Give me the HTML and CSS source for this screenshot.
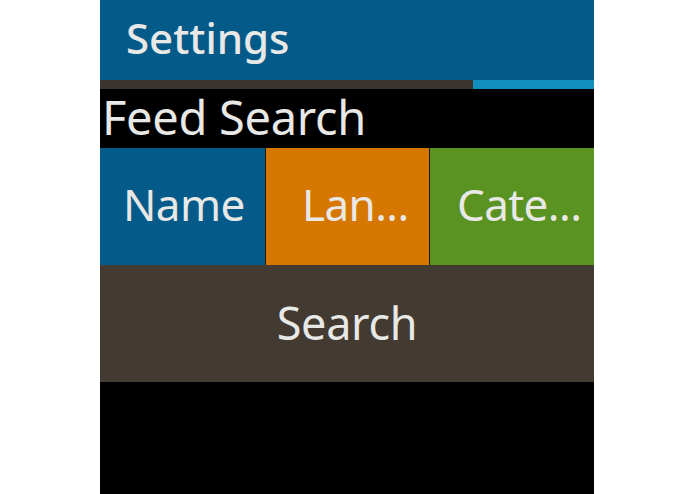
FILE: index.html
```html
<!DOCTYPE html>
<html lang="en">
<head>
<meta charset="utf-8">
<title>Settings</title>
<link rel="stylesheet" href="styles.css">
</head>
<body>
<main class="screen">
  <header class="title-bar"><span class="title-text">Settings</span></header>
  <div class="progress"><div class="progress-track"></div><div class="progress-thumb"></div></div>
  <div class="section-label"><span class="label-text">Feed Search</span></div>
  <div class="tiles">
    <div class="tile tile-name"><span class="tile-text">Name</span></div>
    <div class="tile tile-lang"><span class="tile-text">Lan...</span></div>
    <div class="tile tile-cat"><span class="tile-text">Cate...</span></div>
  </div>
  <div class="search-button"><span class="search-text">Search</span></div>
  <div class="filler"></div>
</main>
</body>
</html>
```
FILE: styles.css
```css
html, body {
  margin: 0;
  padding: 0;
  background: #ffffff;
}
body {
  font-family: "Noto Sans", "Open Sans", sans-serif;
  color: #e8e8e6;
}
.screen {
  width: 494px;
  height: 494px;
  margin-left: 100px;
  background: #000000;
  display: flex;
  flex-direction: column;
  overflow: hidden;
}
.title-bar {
  height: 80px;
  background: #045a89;
  display: flex;
  align-items: center;
  padding: 0 0 5px 26px;
  box-sizing: border-box;
}
.title-text {
  font-size: 42px;
  font-weight: 500;
  line-height: 1;
}
.progress {
  height: 9px;
  display: flex;
}
.progress-track {
  flex: 1;
  background: #3a3431;
}
.progress-thumb {
  width: 121px;
  background: #118ebd;
}
.section-label {
  height: 59px;
  display: flex;
  align-items: center;
  padding: 0 0 3px 2px;
  box-sizing: border-box;
}
.label-text {
  font-size: 47px;
  line-height: 1;
  letter-spacing: -0.3px;
}
.tiles {
  height: 117px;
  display: flex;
  gap: 1px;
  background: #1c1a12;
}
.tile {
  display: flex;
  align-items: center;
  box-sizing: border-box;
  padding-bottom: 5px;
}
.tile-name {
  width: 165px;
  background: #045a89;
  padding-left: 23px;
}
.tile-lang {
  width: 163px;
  background: #d57700;
  padding-left: 36px;
}
.tile-cat {
  width: 164px;
  background: #5a9322;
  padding-left: 27px;
}
.tile-text {
  font-size: 44px;
  line-height: 1;
  letter-spacing: -0.6px;
}
.search-button {
  height: 117px;
  background: #433a31;
  display: flex;
  align-items: center;
  justify-content: center;
  padding-bottom: 3px;
  box-sizing: border-box;
}
.search-text {
  font-size: 45px;
  line-height: 1;
  letter-spacing: -0.3px;
}
.filler {
  flex: 1;
  background: #000000;
}
```
